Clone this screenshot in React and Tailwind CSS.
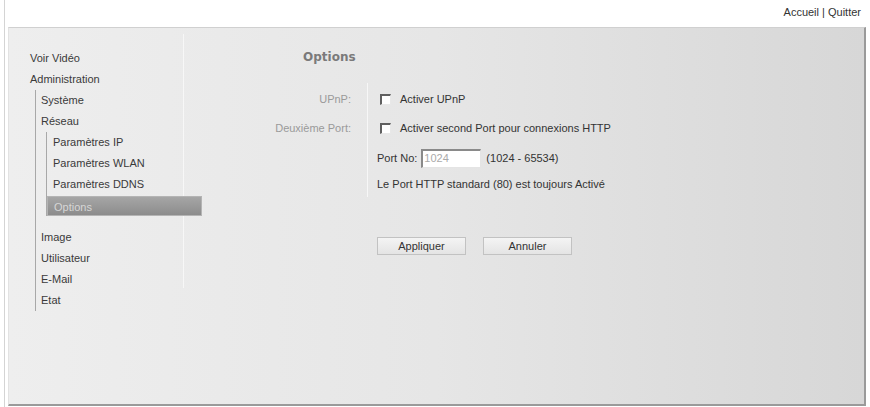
import React from "react";

const F = { fontFamily: '"Liberation Sans", Arial, sans-serif' };

function Checkbox() {
  return (
    <span className="inline-block w-[11px] h-[11px] bg-white border-t-[2px] border-l-[2px] border-r border-b border-t-[#606060] border-l-[#606060] border-r-[#e8e8e8] border-b-[#e8e8e8] ml-[3px] mr-[9px] shrink-0" />
  );
}

function NavItem({ children }) {
  return <div className="h-[21px] leading-[21px] whitespace-nowrap">{children}</div>;
}

export default function App() {
  return (
    <div className="w-[870px] h-[407px] bg-white text-[11px] text-[#3a3a3a] overflow-hidden" style={F}>
      <div className="ml-[4px] h-[407px] border-l border-[#d4d4d4] flex flex-col">
        <div className="h-[27px] flex items-center justify-end pr-[9px] pb-[3px] text-[#333]">
          Accueil | Quitter
        </div>
        <div className="ml-[3px] mr-[4px] h-[379px] border-t border-l border-t-[#d0d0d0] border-l-[#e2e2e2] border-r-[2px] border-b-[2px] border-r-[#9a9a9a] border-b-[#9a9a9a] bg-gradient-to-r from-[#eeeeee] via-[#e6e6e6] to-[#d7d7d7] flex">
          <div className="w-[175px] shrink-0 mt-[6px] h-[254px] border-r border-[#f7f7f7] pt-[14px] pl-[21px]">
            <NavItem>Voir Vidéo</NavItem>
            <NavItem>Administration</NavItem>
            <div className="ml-[5px] pl-[5px] border-l border-[#a8a8a8]">
              <NavItem>Système</NavItem>
              <NavItem>Réseau</NavItem>
              <div className="ml-[5px] mb-[11px] border-l border-[#a8a8a8]">
                <div className="pl-[6px]"><NavItem>Paramètres IP</NavItem></div>
                <div className="pl-[6px]"><NavItem>Paramètres WLAN</NavItem></div>
                <div className="pl-[6px]"><NavItem>Paramètres DDNS</NavItem></div>
                <div className="h-[21px] pt-[1px]">
                  <div className="w-[155px] h-[20px] leading-[20px] pl-[6px] text-[#d6d6d6] bg-gradient-to-b from-[#a6a6a6] to-[#8c8c8c] border border-[#b4b4b4]">
                    Options
                  </div>
                </div>
              </div>
              <NavItem>Image</NavItem>
              <NavItem>Utilisateur</NavItem>
              <NavItem>E-Mail</NavItem>
              <NavItem>Etat</NavItem>
            </div>
          </div>

          <div className="flex-1 pt-[19px]">
            <div
              className="ml-[119px] h-[20px] leading-[20px] text-[12px] font-bold text-[#7a7a7a]"
              style={{ fontFamily: '"DejaVu Sans", Verdana, sans-serif' }}
            >
              Options
            </div>
            <div className="mt-[16px] flex">
              <div className="w-[167px] text-right text-[#9a9a9a] pt-[6px]">
                <div className="h-[21px] leading-[21px]">UPnP:</div>
                <div className="h-[21px] leading-[21px] mt-[8px]">Deuxième Port:</div>
              </div>
              <div className="ml-[16px] border-l border-[#f7f7f7] pl-[9px] pt-[6px] pb-[2px] text-[#333]">
                <div className="h-[21px] flex items-center">
                  <Checkbox />
                  <span>Activer UPnP</span>
                </div>
                <div className="h-[21px] flex items-center mt-[8px]">
                  <Checkbox />
                  <span>Activer second Port pour connexions HTTP</span>
                </div>
                <div className="h-[19px] flex items-center mt-[10px]">
                  <span>Port No:</span>
                  <span className="ml-[4px] w-[60px] h-[19px] bg-white border-t-[2px] border-l-[2px] border-r border-b border-t-[#8a8a8a] border-l-[#8a8a8a] border-r-[#e4e4e4] border-b-[#e4e4e4] leading-[15px] pl-[1px] text-[#aaaaaa]">
                    1024
                  </span>
                  <span className="ml-[5px]">(1024 - 65534)</span>
                </div>
                <div className="h-[21px] leading-[21px] mt-[6px]">
                  Le Port HTTP standard (80) est toujours Activé
                </div>
              </div>
            </div>
            <div className="mt-[40px] ml-[193px] flex gap-[17px]">
              <button className="w-[89px] h-[18px] text-[11px] text-[#333] bg-gradient-to-b from-[#f4f4f4] to-[#e4e4e4] border border-[#c2c2c2]" style={F}>
                Appliquer
              </button>
              <button className="w-[89px] h-[18px] text-[11px] text-[#333] bg-gradient-to-b from-[#f4f4f4] to-[#e4e4e4] border border-[#c2c2c2]" style={F}>
                Annuler
              </button>
            </div>
          </div>
        </div>
      </div>
    </div>
  );
}
